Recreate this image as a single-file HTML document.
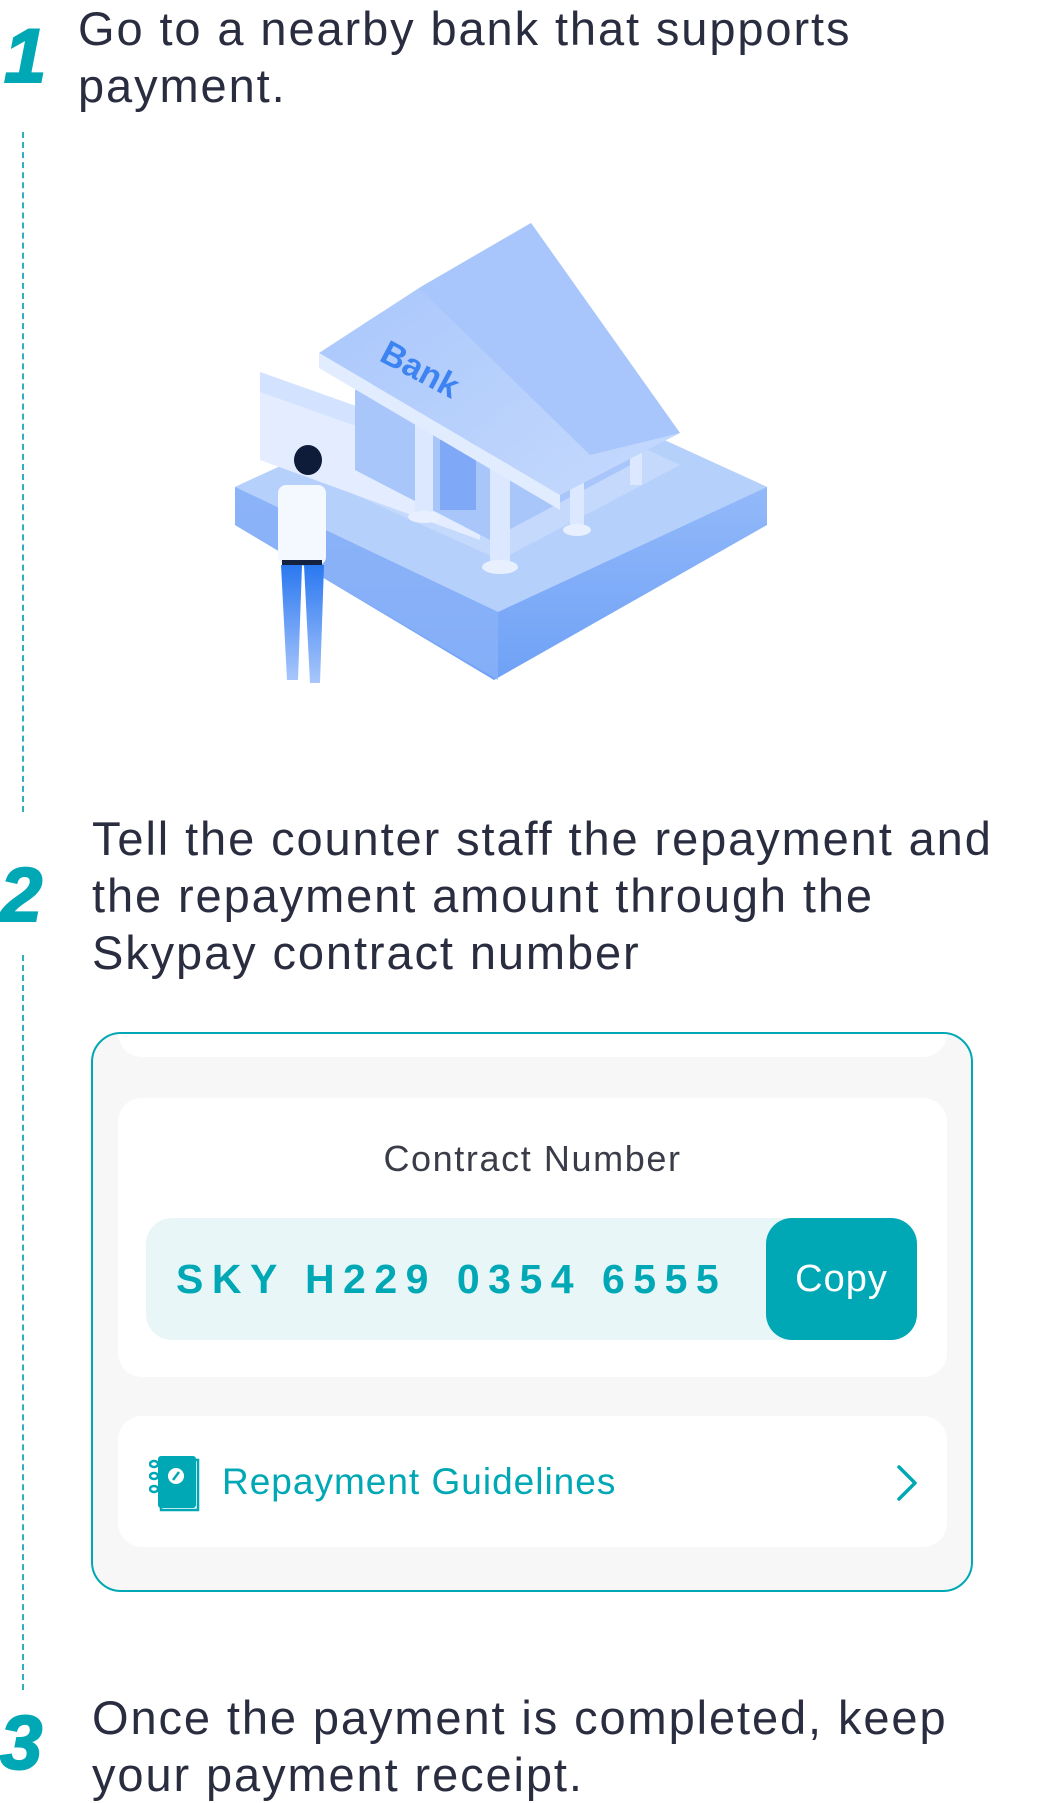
<!DOCTYPE html>
<html><head><meta charset="utf-8"><style>
*{margin:0;padding:0;box-sizing:border-box}
body{width:1038px;height:1800px;background:#fff;position:relative;overflow:hidden;font-family:"Liberation Sans",Arial,sans-serif;color:#2a2d40}
.t{position:absolute;font-size:47px;line-height:57px;letter-spacing:1.9px}
.n{position:absolute;font-style:italic;font-weight:bold;color:#00a8b5;font-size:76px;line-height:74px;-webkit-text-stroke:2px #00a8b5}
.dash{position:absolute;left:22px;width:0;border-left:2px dashed #2fb1bb}
.card{position:absolute;left:91px;top:1032px;width:882px;height:560px;border:2.5px solid #00a8b5;border-radius:30px;background:#f7f7f7;overflow:hidden}
.w{position:absolute;background:#fff;border-radius:24px}
</style></head><body>
<div class="n" style="left:4px;top:20px">1</div>
<div class="t" style="left:78px;top:0px">Go to a nearby bank that supports<br>payment.</div>
<div class="dash" style="top:132px;height:680px"></div>

<svg style="position:absolute;left:225px;top:215px" width="560" height="475" viewBox="225 215 560 475">
<defs>
<linearGradient id="g1" x1="0" y1="0" x2="0" y2="1"><stop offset="0" stop-color="#a9c8fb"/><stop offset="1" stop-color="#6fa1f6"/></linearGradient>
<linearGradient id="g2" x1="0" y1="0" x2="1" y2="1"><stop offset="0" stop-color="#a5c4fb"/><stop offset="1" stop-color="#c6dafd"/></linearGradient>
<linearGradient id="leg" x1="0" y1="0" x2="0" y2="1"><stop offset="0" stop-color="#2a78f0"/><stop offset="1" stop-color="#a8c6fb"/></linearGradient>
</defs>
<path d="M235 487 L500 365 L767 487 L767 525 L494 680 L235 525 Z" fill="url(#g1)"/>
<path d="M235 487 L500 365 L767 487 L498 612 Z" fill="#b6d0fc"/>
<path d="M235 487 L498 612 L498 680 L235 525Z" fill="#8ab2f8" opacity=".8"/>
<path d="M300 470 L520 390 L680 465 L500 560 Z" fill="#c5d9fd"/>
<path d="M260 372 L480 450 L480 540 L260 460 Z" fill="#e3edff"/>
<path d="M260 372 L480 450 L480 470 L260 392 Z" fill="#d2e2ff"/>
<path d="M355 390 L520 330 L640 460 L490 540 L355 470Z" fill="#a9c6fb"/>
<rect x="440" y="440" width="36" height="70" fill="#7fa9f6"/>
<rect x="415" y="420" width="18" height="95" fill="#dce8ff"/>
<rect x="490" y="450" width="20" height="115" fill="#dce8ff"/>
<rect x="570" y="420" width="14" height="110" fill="#dce8ff"/>
<rect x="630" y="400" width="12" height="85" fill="#dce8ff"/>
<ellipse cx="424" cy="517" rx="16" ry="6" fill="#e8f0ff"/>
<ellipse cx="500" cy="567" rx="18" ry="7" fill="#e8f0ff"/>
<ellipse cx="577" cy="530" rx="14" ry="6" fill="#e8f0ff"/>
<path d="M319 353 L419 288 L531 223 L680 433 L560 495 Z" fill="url(#g2)"/>
<path d="M419 288 L531 223 L680 433 L590 455 Z" fill="#a8c6fb"/>
<path d="M319 353 L560 495 L560 510 L319 368Z" fill="#e1ecff"/>
<text x="378" y="360" transform="rotate(28 378 360)" font-family="Liberation Sans" font-weight="bold" font-size="34" fill="#3d84f2">Bank</text>
<ellipse cx="308" cy="460" rx="14" ry="15" fill="#0e1c3a"/>
<rect x="278" y="485" width="48" height="80" rx="8" fill="#f4f8ff"/>
<rect x="282" y="560" width="40" height="5" fill="#14223f"/>
<path d="M281 565 L302 565 L298 680 L287 680 Z" fill="url(#leg)"/>
<path d="M304 565 L324 565 L320 683 L310 683 Z" fill="url(#leg)"/>
</svg>

<div class="n" style="left:0px;top:859px">2</div>
<div class="t" style="left:92px;top:810px">Tell the counter staff the repayment and<br>the repayment amount through the<br>Skypay contract number</div>
<div class="dash" style="top:955px;height:735px"></div>

<div class="card">
  <div class="w" style="left:25px;top:-40px;width:829px;height:63px"></div>
  <div class="w" style="left:25px;top:64px;width:829px;height:279px">
    <div style="position:absolute;left:0;right:0;top:40px;text-align:center;font-size:36px;letter-spacing:1.6px;color:#3a3c48">Contract Number</div>
    <div style="position:absolute;left:28px;top:120px;width:771px;height:122px;background:#e8f6f8;border-radius:26px">
      <div style="position:absolute;left:30px;top:36px;font-size:41px;font-weight:bold;color:#00a8b5;letter-spacing:8.5px;line-height:50px;white-space:nowrap">SKY H229 0354 6555</div>
      <div style="position:absolute;right:0;top:0;width:151px;height:122px;background:#00a8b5;border-radius:26px;color:#fff;font-size:38px;line-height:122px;text-align:center;letter-spacing:1px">Copy</div>
    </div>
  </div>
  <div class="w" style="left:25px;top:382px;width:829px;height:131px">
    <svg style="position:absolute;left:31px;top:38px" width="52" height="58" viewBox="0 0 52 58">
      <rect x="9" y="2" width="38" height="52" rx="3" fill="#00a8b5"/>
      <path d="M46 6 L49 6 L49 56 L12 56 L12 53" fill="none" stroke="#00a8b5" stroke-width="2.5"/>
      <g fill="none" stroke="#00a8b5" stroke-width="2.5"><ellipse cx="5" cy="10" rx="4" ry="3"/><ellipse cx="5" cy="22" rx="4" ry="3"/><ellipse cx="5" cy="35" rx="4" ry="3"/></g>
      <circle cx="27" cy="22" r="8" fill="#fff"/>
      <path d="M24 26 L30 18" stroke="#00a8b5" stroke-width="2.5"/>
    </svg>
    <div style="position:absolute;left:104px;top:44px;font-size:37px;letter-spacing:1px;color:#00a8b5;line-height:44px">Repayment Guidelines</div>
    <svg style="position:absolute;left:777px;top:48px" width="24" height="38" viewBox="0 0 24 38"><path d="M4 3 L20 19 L4 35" fill="none" stroke="#00a8b5" stroke-width="3.5" stroke-linecap="round" stroke-linejoin="round"/></svg>
  </div>
</div>

<div class="n" style="left:0px;top:1707px">3</div>
<div class="t" style="left:92px;top:1689px">Once the payment is completed, keep<br>your payment receipt.</div>
</body></html>
